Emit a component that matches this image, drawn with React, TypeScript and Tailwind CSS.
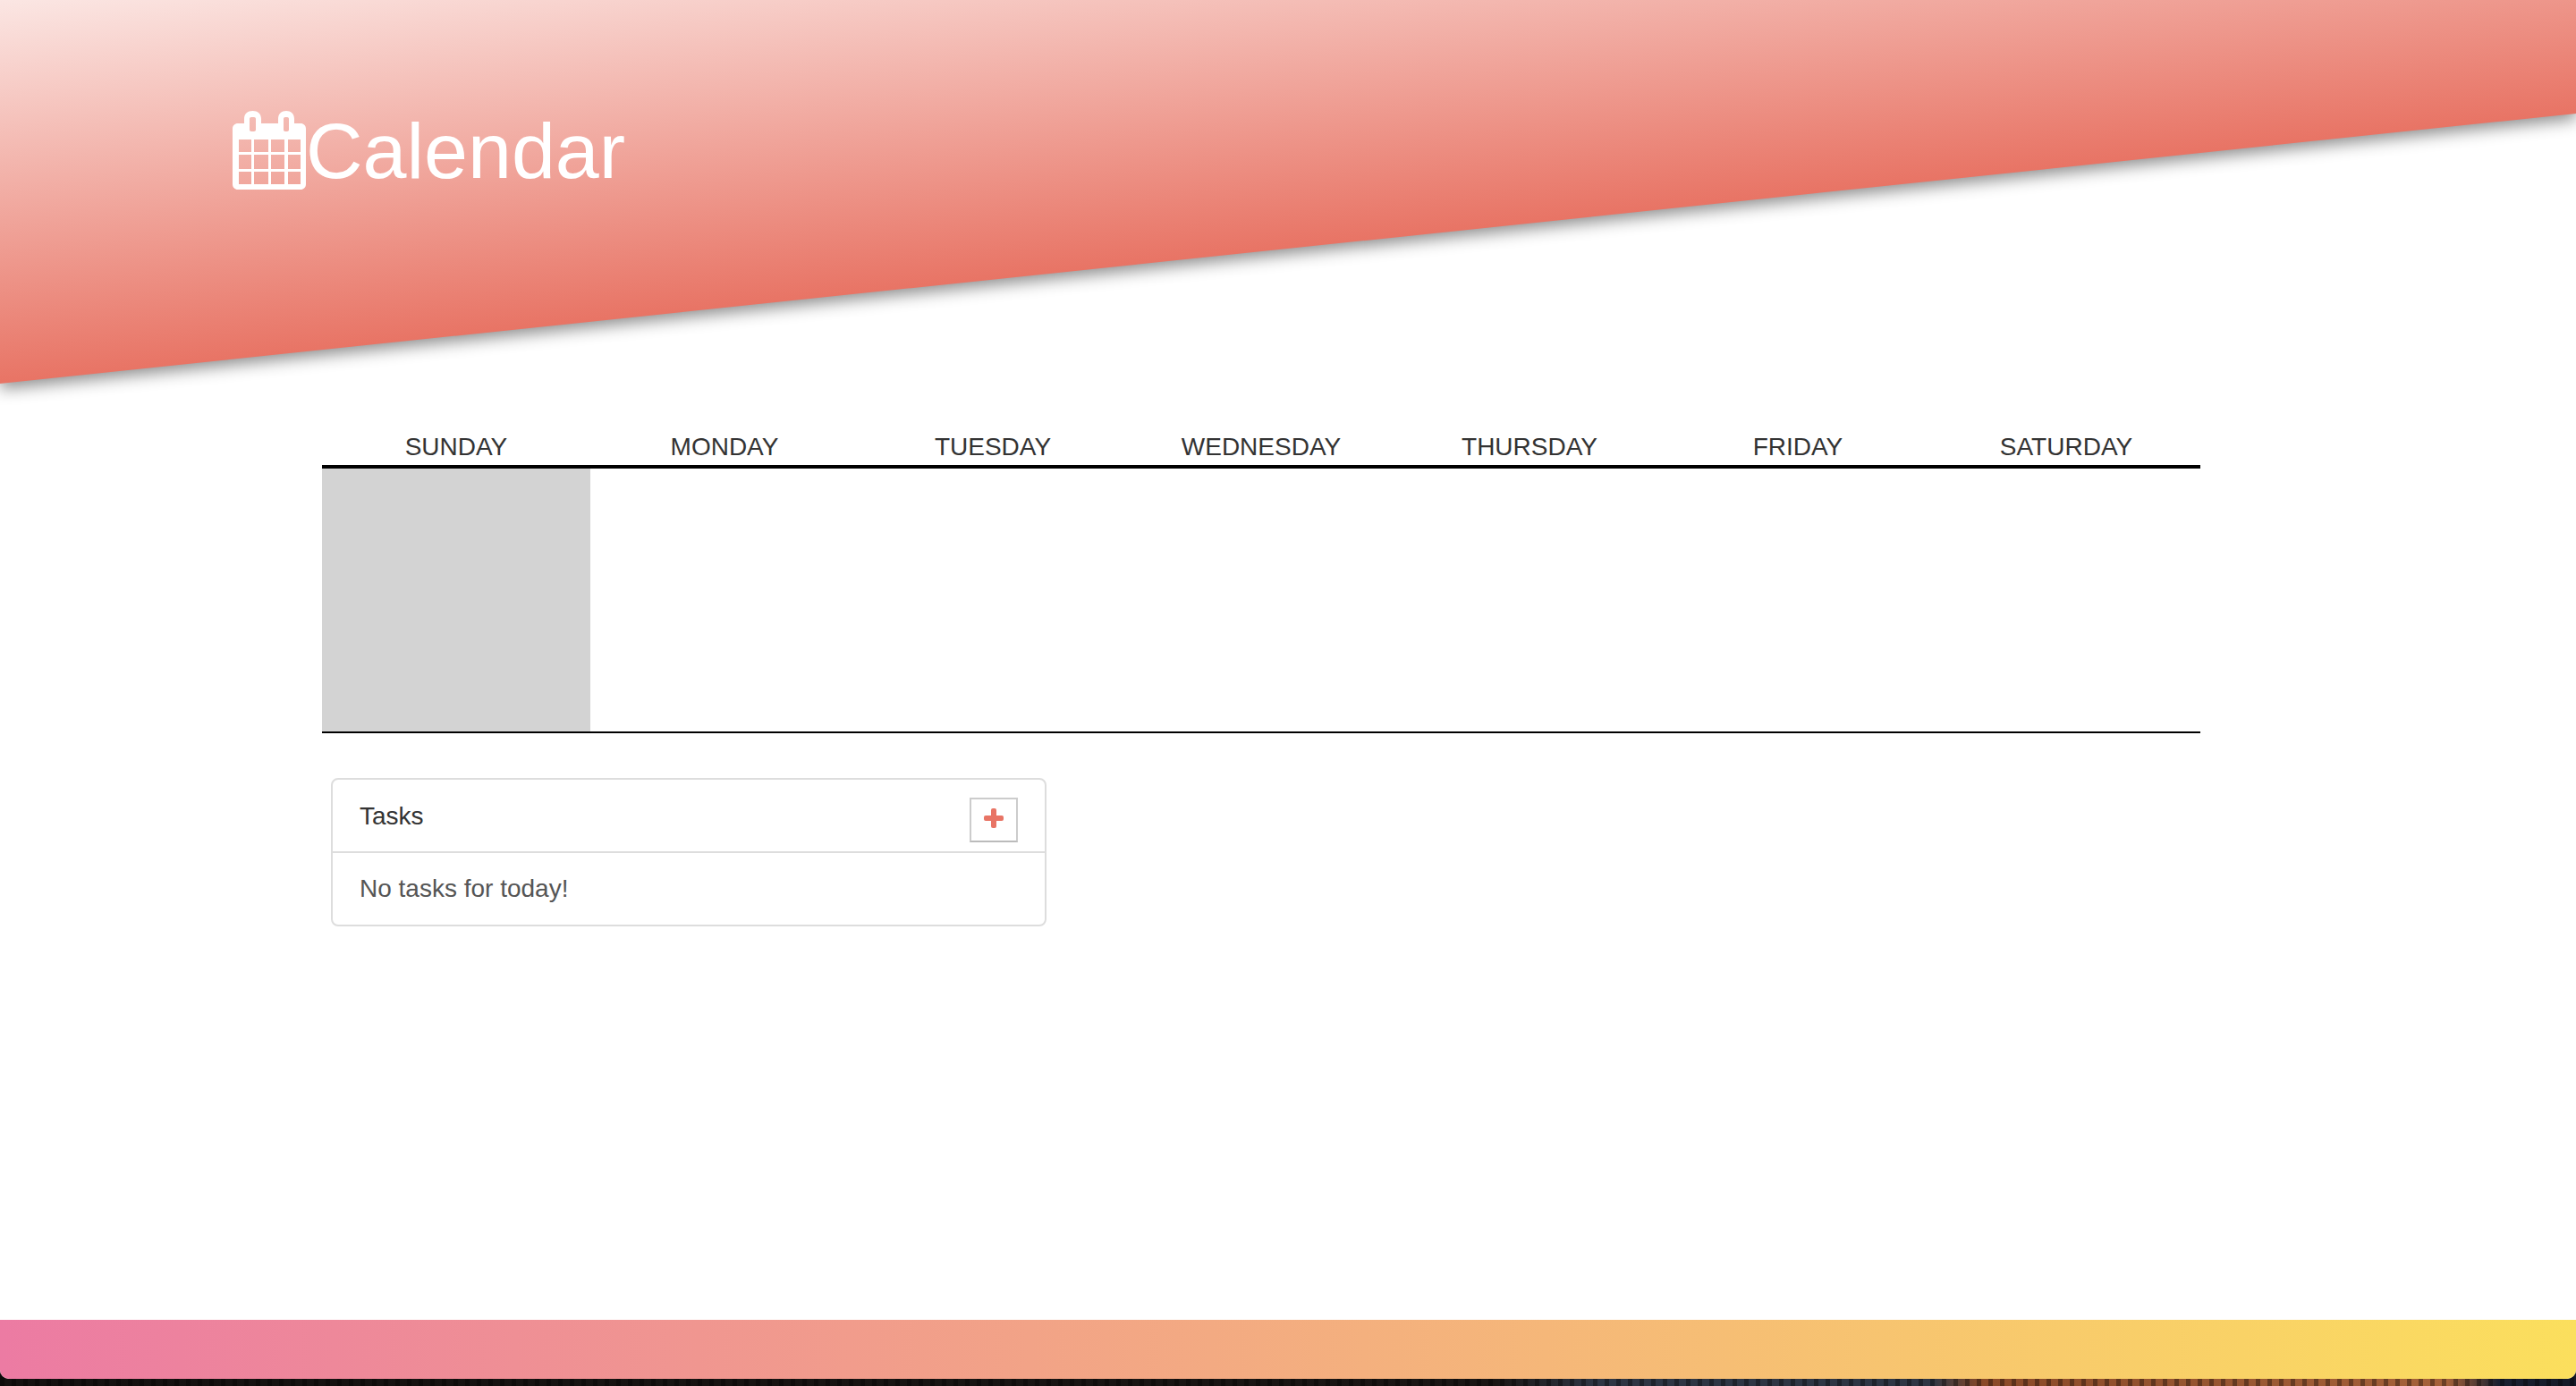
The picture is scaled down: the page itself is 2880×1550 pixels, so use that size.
import React from 'react';

const days = ['SUNDAY', 'MONDAY', 'TUESDAY', 'WEDNESDAY', 'THURSDAY', 'FRIDAY', 'SATURDAY'];

function CalendarIcon() {
  return (
    <svg viewBox="0 0 82 88" className="w-[82px] h-[88px] shrink-0" fill="#fff">
      <path
        fillRule="evenodd"
        d="M6 14H13V9C13 3 17 0 22.500 0C28 0 32 3 32 9V14H51V9C51 3 55 0 60 0C65 0 69 3 69 9V14H76C79.500 14 82 16.500 82 20V82C82 85.500 79.500 88 76 88H6C2.500 88 0 85.500 0 82V20C0 16.500 2.500 14 6 14ZM21 7C19.800 7 19 7.800 19 9V21C19 22.200 19.800 23 21 23H24C25.200 23 26 22.200 26 21V9C26 7.800 25.200 7 24 7ZM59 7C57.800 7 57 7.800 57 9V21C57 22.200 57.800 23 59 23H61C62.200 23 63 22.200 63 21V9C63 7.800 62.200 7 61 7ZM7 32V46H21V32ZM24 32V46H40V32ZM43 32V46H58V32ZM62 32V46H76V32ZM7 49V65H21V49ZM24 49V65H40V49ZM43 49V65H58V49ZM62 49V65H76V49ZM7 68V82H21V68ZM24 68V82H40V68ZM43 68V82H58V68ZM62 68V82H76V68Z"
      />
    </svg>
  );
}

export default function App() {
  return (
    <div className="h-[1550px] flex flex-col overflow-hidden font-['Liberation_Sans',Arial,sans-serif] bg-[repeating-linear-gradient(90deg,rgba(0,0,0,0.35)_0_5px,transparent_5px_13px),linear-gradient(90deg,#141110_0%,#1a1614_58%,#2e3644_62%,#2e3644_75%,#8a4a28_77%,#a5623a_95%,#1a2030_97%,#141a28_100%)]">
      <div className="flex-1 flex flex-col bg-white rounded-b-[10px] overflow-hidden">
        <header className="h-[430px] shrink-0 drop-shadow-[0_6px_9px_rgba(0,0,0,0.45)]">
          <div className="h-full pl-[260px] pt-[124px] bg-[linear-gradient(174deg,#fbe6e3_0%,#e87465_58.500%)] [clip-path:polygon(0_0,100%_0,100%_127px,0_429px)]">
            <div className="flex items-start">
              <CalendarIcon />
              <h1 className="pt-[1px] text-[88px] leading-[88px] font-normal text-white">Calendar</h1>
            </div>
          </div>
        </header>

        <section className="w-[2100px] ml-[360px] mt-[50px]">
          <div className="grid grid-cols-7 h-[44px] border-b-4 border-black text-[28px] leading-[40px] text-[#333] text-center">
            {days.map((day) => (
              <div key={day}>{day}</div>
            ))}
          </div>
          <div className="grid grid-cols-7 h-[296px] border-b-2 border-black">
            <div className="bg-[#d3d3d3]" />
          </div>
        </section>

        <section className="w-[800px] ml-[370px] mt-[50px] border-2 border-[#ddd] rounded-lg text-[28px] leading-[40px] text-[#333]">
          <div className="h-[82px] pl-[30px] pr-[30px] flex justify-between border-b-2 border-[#ddd]">
            <span className="pt-[21px]">Tasks</span>
            <button className="w-[54px] h-[50px] mt-[20px] pb-[4px] flex items-center justify-center border-2 border-[#ccc] border-b-[#bbb] bg-white">
              <span className="relative block w-[22px] h-[22px]">
                <span className="absolute left-[8px] top-0 w-[6px] h-[22px] rounded-[2px] bg-[#e87465]" />
                <span className="absolute left-0 top-[8px] w-[22px] h-[6px] rounded-[2px] bg-[#e87465]" />
              </span>
            </button>
          </div>
          <div className="h-[80px] pl-[30px] pt-[20px] text-[#555]">No tasks for today!</div>
        </section>

        <footer className="mt-auto h-[66px] shrink-0 bg-[linear-gradient(90deg,#ec7ba3,#fbdf5d)]" />
      </div>
      <div className="h-[8px] shrink-0" />
    </div>
  );
}
